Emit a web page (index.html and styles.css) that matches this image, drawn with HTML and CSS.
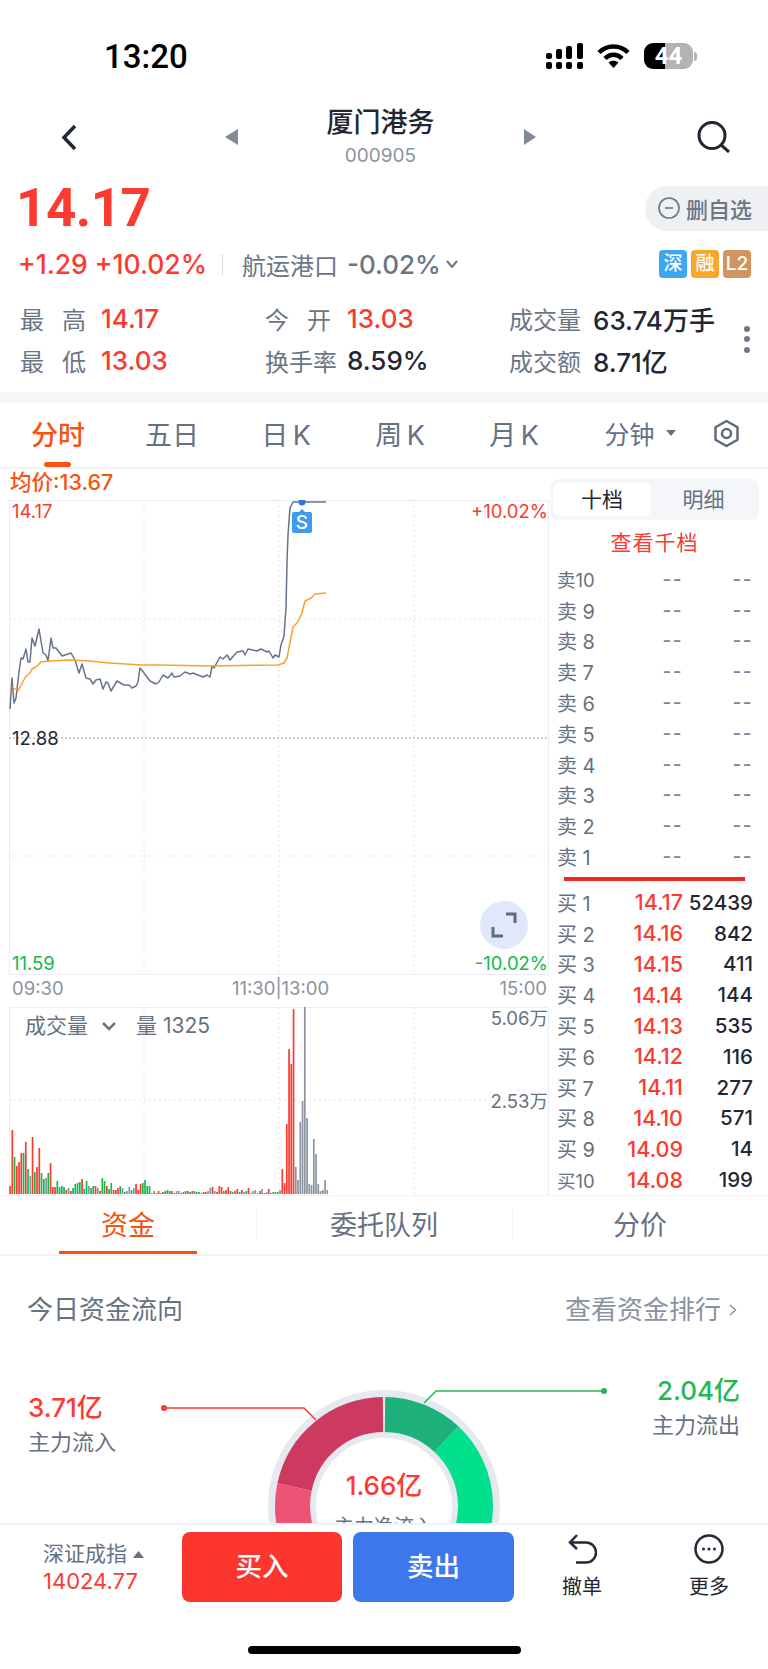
FILE: index.html
```html
<!DOCTYPE html>
<html>
<head>
<meta charset="UTF-8">
<title>厦门港务 000905</title>
<link rel="stylesheet" href="styles.css">
</head>
<body>
<div class="page">

<div class="status">
  <span class="clock">13:20</span>
  <svg class="signal" width="37" height="26" viewBox="0 0 37 26">
    <rect x="0" y="10" width="6" height="6" rx="2"/><rect x="10" y="6" width="6" height="10" rx="2"/><rect x="20" y="3" width="6" height="13" rx="2"/><rect x="31" y="0" width="6" height="16" rx="2"/>
    <rect x="0" y="19" width="6" height="7" rx="2"/><rect x="10" y="19" width="6" height="7" rx="2"/><rect x="20" y="19" width="6" height="7" rx="2"/><rect x="31" y="19" width="6" height="7" rx="2"/>
  </svg>
  <svg class="wifi" width="33" height="25" viewBox="0 0 33 25">
    <path d="M2 9.5C10 1.500 23 1.500 31 9.500M8 15.500C13 10.500 20 10.500 25 15.500" fill="none" stroke="#000" stroke-width="4.500"/>
    <path d="M11.500 19.500C14.500 17 18.500 17 21.500 19.500L16.500 25Z"/>
  </svg>
  <div class="battery"><span>44</span></div>
  <div class="battery-cap"></div>
</div>

<div class="nav">
  <svg class="back" width="16" height="27" viewBox="0 0 16 27"><path d="M14 2L3 13.500L14 25" fill="none" stroke="#1f2733" stroke-width="3.500"/></svg>
  <svg width="14" height="16" viewBox="0 0 14 16"><path d="M13 0V16L0 8Z" fill="#808a98"/></svg>
  <div class="nav-title">
    <div class="name">厦门港务</div>
    <div class="code">000905</div>
  </div>
  <svg width="12" height="16" viewBox="0 0 12 16"><path d="M0 0V16L12 8Z" fill="#808a98"/></svg>
  <svg class="search" width="33" height="32" viewBox="0 0 33 32"><circle cx="15" cy="14.500" r="13" fill="none" stroke="#1f2733" stroke-width="3"/><path d="M24 24L32 31" stroke="#1f2733" stroke-width="3"/></svg>
</div>

<div class="quote">
  <div class="price">14.17</div>
  <div class="fav">
    <svg width="22" height="22" viewBox="0 0 22 22"><circle cx="11" cy="11" r="10" fill="none" stroke="#6b7685" stroke-width="1.600"/><path d="M7 11H15" stroke="#6b7685" stroke-width="1.600"/></svg>
    删自选
  </div>
</div>

<div class="change">
  <span class="up">+1.29 +10.02%</span>
  <i class="sep"></i>
  <span class="sector">航运港口</span>
  <span class="sector-val">-0.02%</span>
  <svg width="12" height="8" viewBox="0 0 12 8"><path d="M1 1L6 7L11 1" fill="none" stroke="#6b7685" stroke-width="2"/></svg>
  <div class="badges">
    <b class="badge blue">深</b><b class="badge orange">融</b><b class="badge tan">L2</b>
  </div>
</div>

<div class="stats">
  <div class="stat"><span class="label w81"><span class="just">最 高</span></span><span class="val up">14.17</span></div>
  <div class="stat"><span class="label w82"><span class="just">今 开</span></span><span class="val up">13.03</span></div>
  <div class="stat"><span class="label w84">成交量</span><span class="val">63.74万手</span></div>
  <div class="dots"><i></i><i></i><i></i></div>
  <div class="stat"><span class="label w81"><span class="just">最 低</span></span><span class="val up">13.03</span></div>
  <div class="stat"><span class="label w82">换手率</span><span class="val">8.59%</span></div>
  <div class="stat"><span class="label w84">成交额</span><span class="val">8.71亿</span></div>
</div>

<div class="band"></div>

<div class="tabs">
  <div class="tab active">分时</div>
  <div class="tab">五日</div>
  <div class="tab">日 K</div>
  <div class="tab">周 K</div>
  <div class="tab">月 K</div>
  <div class="tab minute">分钟<svg class="caret" width="10" height="6" viewBox="0 0 10 6"><path d="M0 0H10L5 6Z" fill="#667182"/></svg></div>
  <div class="tab">
    <svg width="27" height="29" viewBox="0 0 27 29"><path d="M13.500 2L24.500 8.250V20.750L13.500 27L2.500 20.750V8.250Z" fill="none" stroke="#5f6b7c" stroke-width="2.500" stroke-linejoin="round"/><circle cx="13.500" cy="14.500" r="4.500" fill="none" stroke="#5f6b7c" stroke-width="2.500"/></svg>
  </div>
</div>

<div class="main">
  <div class="left">
    <div class="avg">均价:13.67</div>

    <div class="chart">
      <svg width="540" height="475" viewBox="0 0 540 475">
        <rect x="0.500" y="0.500" width="539" height="474" fill="none" stroke="#e9edf4"/>
        <path d="M135 0V475M270 0V475M405 0V475M0 119H540M0 356H540" stroke="#dfe3ea" stroke-dasharray="2 3" fill="none"/>
        <path d="M0 238H540" stroke="#9aa2ad" stroke-dasharray="2 2" fill="none"/>
        <polyline class="price-line" points="1,209 3,178 5,203 7,198 10,172 12,158 14,159 17,149 19,162 21,162 23,138 26,146 30,129 34,153 37,155 39,161 42,138 44,148 47,148 53,156 62,153 66,160 70,173 73,164 77,178 81,179 84,184 87,180 91,179 94,189 97,182 99,183 102,191 108,181 115,185 120,185 123,188 127,186 129,182 131,168 135,173 141,181 147,184 150,182 154,175 159,178 163,173 165,177 171,176 176,172 181,174 184,173 189,175 194,177 198,175 201,177 203,166 205,168 211,157 214,159 218,155 221,160 228,152 234,151 236,155 239,149 248,151 252,149 258,152 260,151 264,158 266,155 270,157 272,145 275,136 277,108 278,62 279,35 281,8 284,2 317,2"/>
        <polyline class="avg-line" points="3,187 9,191 17,176 21,173 23,169 27,167 32,162 40,161 60,160 80,161 100,163 133,165 150,165 201,166 269,165 275,163 278,158 284,127 288,123 293,113 296,101 302,98 306,94 317,93"/>
        <circle cx="293" cy="2" r="3.500" fill="#2f78e4"/>
        <path d="M285 12H290L293 9L296 12H301Q303 12 303 14V31Q303 33 301 33H285Q283 33 283 31V14Q283 12 285 12Z" fill="#3d9bf3"/>
        <text class="s-mark" x="293" y="29" text-anchor="middle">S</text>
      </svg>
      <span class="axis up top-l">14.17</span>
      <span class="axis up top-r">+10.02%</span>
      <span class="axis mid-l">12.88</span>
      <span class="axis down bot-l">11.59</span>
      <span class="axis down bot-r">-10.02%</span>
      <div class="expand">
        <svg width="48" height="48" viewBox="0 0 48 48"><path d="M26 13H35V22M13 26V35H23" fill="none" stroke="#606c7d" stroke-width="3"/></svg>
      </div>
    </div>

    <div class="times"><span>09:30</span><span class="t-mid">11:30|13:00</span><span>15:00</span></div>

    <div class="vol">
      <svg id="vol-chart" width="540" height="188" viewBox="0 0 540 188">
        <path d="M0.500 188V0.500H539.500V188" fill="none" stroke="#e9edf4"/>
        <path d="M135 0V188M270 0V188M405 0V188M0 93H540" stroke="#dfe3ea" stroke-dasharray="2 3" fill="none"/>
      </svg>
      <div class="vol-head">
        <span>成交量</span>
        <svg width="14" height="9" viewBox="0 0 14 9"><path d="M1 1L7 7L13 1" fill="none" stroke="#667182" stroke-width="2.500"/></svg>
        <span>量 1325</span>
      </div>
      <span class="vol-tick v-max">5.06万</span>
      <span class="vol-tick v-half">2.53万</span>
    </div>
  </div>

  <div class="book">
    <div class="seg"><div class="seg-item on">十档</div><div class="seg-item">明细</div></div>
    <div class="more-link">查看千档</div>
    <div class="row"><span class="lv tens">卖10</span><span class="nil">--</span><span class="nil">--</span></div>
    <div class="row"><span class="lv">卖 9</span><span class="nil">--</span><span class="nil">--</span></div>
    <div class="row"><span class="lv">卖 8</span><span class="nil">--</span><span class="nil">--</span></div>
    <div class="row"><span class="lv">卖 7</span><span class="nil">--</span><span class="nil">--</span></div>
    <div class="row"><span class="lv">卖 6</span><span class="nil">--</span><span class="nil">--</span></div>
    <div class="row"><span class="lv">卖 5</span><span class="nil">--</span><span class="nil">--</span></div>
    <div class="row"><span class="lv">卖 4</span><span class="nil">--</span><span class="nil">--</span></div>
    <div class="row"><span class="lv">卖 3</span><span class="nil">--</span><span class="nil">--</span></div>
    <div class="row"><span class="lv">卖 2</span><span class="nil">--</span><span class="nil">--</span></div>
    <div class="row"><span class="lv">卖 1</span><span class="nil">--</span><span class="nil">--</span></div>
    <div class="book-line"></div>
    <div class="row"><span class="lv">买 1</span><span class="px">14.17</span><span class="qty">52439</span></div>
    <div class="row"><span class="lv">买 2</span><span class="px">14.16</span><span class="qty">842</span></div>
    <div class="row"><span class="lv">买 3</span><span class="px">14.15</span><span class="qty">411</span></div>
    <div class="row"><span class="lv">买 4</span><span class="px">14.14</span><span class="qty">144</span></div>
    <div class="row"><span class="lv">买 5</span><span class="px">14.13</span><span class="qty">535</span></div>
    <div class="row"><span class="lv">买 6</span><span class="px">14.12</span><span class="qty">116</span></div>
    <div class="row"><span class="lv">买 7</span><span class="px">14.11</span><span class="qty">277</span></div>
    <div class="row"><span class="lv">买 8</span><span class="px">14.10</span><span class="qty">571</span></div>
    <div class="row"><span class="lv">买 9</span><span class="px">14.09</span><span class="qty">14</span></div>
    <div class="row"><span class="lv tens">买10</span><span class="px">14.08</span><span class="qty">199</span></div>
  </div>
</div>

<div class="sub-tabs">
  <div class="sub-tab active">资金</div>
  <div class="sub-tab">委托队列</div>
  <div class="sub-tab">分价</div>
</div>

<div class="flow">
  <svg class="donut" width="768" height="267" viewBox="0 0 768 267">
    <circle cx="384" cy="250" r="92" fill="none" stroke="#e6e9f0" stroke-width="48"/>
    <g fill="none" stroke-width="35">
      <path d="M385 158.500A91.500 91.500 0 0 1 446.400 183.100" stroke="#1db07a"/>
      <path d="M446.400 183.100A91.500 91.500 0 0 1 448.700 314.700" stroke="#02e08e"/>
      <path d="M383 158.500A91.500 91.500 0 0 0 294.500 231" stroke="#cc3a5f"/>
      <path d="M294.500 231A91.500 91.500 0 0 0 319.300 314.700" stroke="#ec5475"/>
    </g>
    <path d="M164 152H304L316 164" fill="none" stroke="#fb3a30" stroke-width="1.500"/>
    <circle cx="164" cy="152" r="3" fill="#fb3a30"/>
    <path d="M424 147L436 135H604" fill="none" stroke="#1fb954" stroke-width="1.500"/>
    <circle cx="604" cy="135" r="3" fill="#1fb954"/>
  </svg>
  <div class="flow-head">
    <span>今日资金流向</span>
    <span class="rank">查看资金排行<svg width="8" height="12" viewBox="0 0 8 12"><path d="M1 1L6.500 6L1 11" fill="none" stroke="#8a93a0" stroke-width="1.500"/></svg></span>
  </div>
  <div class="flow-val in"><b>3.71亿</b><span>主力流入</span></div>
  <div class="flow-val out"><b>2.04亿</b><span>主力流出</span></div>
  <div class="flow-val net"><b>1.66亿</b><span>主力净流入</span></div>
</div>

<div class="footer">
  <div class="foot-row">
    <div class="index">
      <div class="index-name">深证成指<svg width="11" height="7" viewBox="0 0 11 7"><path d="M5.500 0L11 7H0Z" fill="#667182"/></svg></div>
      <div class="index-val">14024.77</div>
    </div>
    <div class="trade buy">买入</div>
    <div class="trade sell">卖出</div>
    <div class="act undo">
      <svg width="30" height="30" viewBox="0 0 30 30"><path d="M10 1L3 8.500L10 15M3 8.500H19A10 10 0 0 1 19 28.500H9" fill="none" stroke="#222a35" stroke-width="2.500"/></svg>
      <span>撤单</span>
    </div>
    <div class="act more">
      <svg width="30" height="30" viewBox="0 0 30 30"><circle cx="15" cy="15" r="13.500" fill="none" stroke="#222a35" stroke-width="2.500"/><circle cx="9.500" cy="15" r="1.500" fill="#222a35"/><circle cx="15" cy="15" r="1.500" fill="#222a35"/><circle cx="20.500" cy="15" r="1.500" fill="#222a35"/></svg>
      <span>更多</span>
    </div>
  </div>
  <div class="home-bar"></div>
</div>

</div>
<script src="script.js"></script>
</body>
</html>
```

FILE: styles.css
```css
:root {
  --red: #fb3a30;
  --green: #13b84f;
  --orange: #f5540e;
  --ink: #1f2733;
  --gray: #6b7685;
  --light: #8a93a0;
  --line: #f1f3f7;
}

* { box-sizing: border-box; }

html, body {
  margin: 0;
  padding: 0;
  background: #fff;
}

.page {
  width: 768px;
  height: 1669px;
  overflow: hidden;
  display: flex;
  flex-direction: column;
  color: var(--ink);
  font-family: Inter, "Noto Sans CJK SC", sans-serif;
}

.up { color: var(--red); }
.down { color: var(--green); }

/* status bar */
.status {
  height: 100px;
  flex: none;
  display: flex;
  align-items: flex-start;
  padding: 43px 0 0 104px;
  color: #000;
}
.clock {
  font-family: Roboto, sans-serif;
  font-size: 33px;
  line-height: 28px;
  font-weight: 500;
}
.signal { margin-left: auto; }
.wifi { margin-left: 14px; }
.battery {
  width: 49px;
  height: 26px;
  margin-left: 14px;
  border-radius: 9px;
  background: linear-gradient(90deg, #000 43%, #b3b3b3 43%);
  color: #fff;
  font-family: Roboto, sans-serif;
  font-size: 24px;
  font-weight: 700;
  line-height: 26px;
  text-align: center;
}
.battery-cap {
  width: 3px;
  height: 9px;
  margin: 9px 71px 0 1px;
  border-radius: 0 3px 3px 0;
  background: #b3b3b3;
}

/* title */
.nav {
  height: 74px;
  flex: none;
  display: grid;
  grid-template-columns: 225px 14px 285px 12px 1fr;
  align-items: center;
}
.back { margin-left: 61px; }
.search { margin-left: 161px; }
.nav-title { text-align: center; }
.name {
  margin-left: -2px;
  font-size: 27px;
  line-height: 32px;
  font-weight: 500;
}
.code {
  margin-top: 6px;
  margin-left: -2px;
  font-size: 19px;
  line-height: 22px;
  color: var(--light);
}

/* price */
.quote {
  height: 45px;
  margin-top: 12px;
  flex: none;
  display: flex;
  justify-content: space-between;
  padding-left: 16px;
}
.price {
  font-family: Roboto, sans-serif;
  font-size: 53px;
  line-height: 45px;
  font-weight: 700;
  color: var(--red);
  letter-spacing: -0.5px;
}
.fav {
  width: 123px;
  display: flex;
  align-items: center;
  gap: 6px;
  padding-left: 13px;
  padding-bottom: 2px;
  border-radius: 22px 0 0 22px;
  background: #eef0f3;
  color: var(--gray);
  font-size: 22px;
  font-weight: 500;
}

.change {
  height: 28px;
  margin-top: 19px;
  flex: none;
  display: flex;
  align-items: center;
  padding: 0 17px 0 18px;
  font-size: 26.500px;
  font-weight: 500;
  white-space: nowrap;
}
.sep {
  width: 1px;
  height: 21px;
  margin: 0 19px 0 15px;
  background: #d5d9df;
}
.sector { color: var(--gray); font-size: 24px; font-weight: 400; }
.sector-val {
  margin: 0 5px 0 9px;
  color: var(--gray);
  font-size: 26px;
}
.badges {
  margin-left: auto;
  display: flex;
  gap: 4px;
}
.badge {
  width: 28px;
  height: 28px;
  border-radius: 4px;
  color: #fff;
  font-size: 19px;
  font-weight: 500;
  line-height: 28px;
  text-align: center;
}
.blue { background: #3ea7f2; }
.orange { background: #f9a62a; }
.tan { background: #cf9462; }

/* stats */
.stats {
  margin-top: 19px;
  padding-left: 20px;
  flex: none;
  display: grid;
  grid-template-columns: 245px 244px 233px 10px;
  grid-auto-rows: 42px;
  align-items: center;
}
.stat { display: flex; align-items: center; }
.label {
  flex: none;
  color: var(--gray);
  font-size: 24px;
}
.w81 { width: 81px; }
.w82 { width: 82px; }
.w84 { width: 84px; }
.just {
  display: inline-block;
  width: 66px;
  text-align-last: justify;
}
.val {
  font-size: 26px;
  font-weight: 500;
  white-space: nowrap;
}
.dots {
  grid-column: 4;
  grid-row: 1 / span 2;
  display: flex;
  flex-direction: column;
  align-items: center;
  gap: 4.500px;
}
.dots i {
  width: 6px;
  height: 6px;
  border-radius: 50%;
  background: #6f7988;
}

.band {
  height: 11px;
  margin-top: 11px;
  flex: none;
  background: #f5f6f9;
}

/* chart tabs */
.tabs {
  height: 66px;
  flex: none;
  display: grid;
  grid-template-columns: repeat(6, 114px) 1fr;
  padding-left: 1px;
  border-bottom: 2px solid var(--line);
}
.tab {
  position: relative;
  display: flex;
  align-items: center;
  justify-content: center;
  padding-bottom: 4px;
  color: #667182;
  font-size: 27px;
  word-spacing: -3px;
}
.tab.active {
  color: var(--orange);
  font-weight: 500;
}
.tab.active::after {
  content: "";
  position: absolute;
  left: 43px;
  bottom: 0;
  width: 27px;
  height: 5px;
  border-radius: 3px;
  background: var(--orange);
}
.tab.minute {
  padding-left: 24px;
  font-size: 25px;
}
.caret { margin-left: 11px; }

.main {
  height: 726px;
  flex: none;
  display: flex;
}
.left { width: 550px; flex: none; }
.avg {
  height: 31px;
  padding-left: 10px;
  color: var(--orange);
  font-size: 21.500px;
  line-height: 26px;
  font-weight: 500;
}

.chart {
  position: relative;
  width: 540px;
  height: 475px;
  margin-left: 9px;
}
.chart svg, .vol svg { display: block; }
.price-line, .avg-line {
  fill: none;
  stroke-width: 1.500;
  stroke-linejoin: round;
}
.price-line { stroke: #66748a; }
.avg-line { stroke: #f7a032; }
.s-mark {
  fill: #fff;
  font-size: 19px;
  font-weight: 500;
}
.axis {
  position: absolute;
  font-size: 18.500px;
  line-height: 20px;
}
.top-l { left: 3px; top: 1px; }
.top-r { right: 1px; top: 1px; }
.mid-l { left: 3px; top: 228px; color: var(--ink); }
.bot-l { left: 3px; bottom: 2px; }
.bot-r { right: 1px; bottom: 2px; }
.expand {
  position: absolute;
  left: 471px;
  top: 401px;
  width: 48px;
  height: 48px;
  border-radius: 50%;
  background: #e0e9fb;
}

.times {
  height: 32px;
  margin-left: 12px;
  width: 535px;
  display: flex;
  justify-content: space-between;
  color: var(--light);
  font-size: 18.500px;
  line-height: 24px;
  padding-top: 1px;
}
.t-mid { margin-left: -2px; }

.vol {
  position: relative;
  width: 540px;
  height: 188px;
  margin-left: 9px;
}
.vol-head {
  position: absolute;
  left: 16px;
  top: 6px;
  display: flex;
  align-items: center;
  color: #667182;
  font-size: 21px;
  line-height: 26px;
}
.vol-head svg { margin: 0 20px 0 14px; }
.vol-tick {
  position: absolute;
  right: 1px;
  color: #667182;
  font-size: 18.500px;
  line-height: 20px;
}
.v-max { top: 1px; }
.v-half { top: 84px; }

/* order book */
.book {
  width: 218px;
  flex: none;
}
.seg {
  width: 209px;
  height: 41px;
  margin-top: 10px;
  padding: 4px 3px;
  display: flex;
  border-radius: 8px;
  background: #f5f6f9;
}
.seg-item {
  flex: 1;
  color: #667182;
  font-size: 21px;
  line-height: 33px;
  text-align: center;
}
.seg-item.on {
  flex: none;
  width: 98px;
  border-radius: 6px;
  background: #fff;
  color: var(--ink);
}
.more-link {
  height: 44px;
  padding: 10px 0 0 0;
  width: 209px;
  color: var(--red);
  font-size: 21px;
  line-height: 26px;
  text-align: center;
  letter-spacing: 1px;
}
.row {
  height: 30.800px;
  padding-left: 7px;
  display: grid;
  grid-template-columns: 56px 70px 70px;
  align-items: center;
  font-size: 20.500px;
  font-weight: 500;
  white-space: nowrap;
}
.lv {
  color: #667182;
  font-weight: 400;
  font-size: 20px;
}
.lv.tens { font-size: 18.500px; }
.nil {
  color: #7d8695;
  text-align: right;
  font-size: 19px;
  letter-spacing: 1.500px;
}
.px {
  color: var(--red);
  text-align: right;
  font-size: 21.500px;
}
.qty { text-align: right; }
.book-line {
  width: 181px;
  height: 4px;
  margin: 5px 0 6px 14px;
  background: #ea2a26;
}

/* lower tabs */
.sub-tabs {
  height: 61px;
  flex: none;
  display: grid;
  grid-template-columns: repeat(3, 1fr);
  border-top: 1px solid var(--line);
  border-bottom: 2px solid var(--line);
}
.sub-tab {
  position: relative;
  display: flex;
  align-items: center;
  justify-content: center;
  padding-bottom: 4px;
  color: #667182;
  font-size: 27px;
}
.sub-tab + .sub-tab::before {
  content: "";
  position: absolute;
  left: 0;
  top: 14px;
  width: 1px;
  height: 30px;
  background: var(--line);
}
.sub-tab.active { color: var(--orange); }
.sub-tab.active::after {
  content: "";
  position: absolute;
  left: 59px;
  bottom: 0;
  width: 138px;
  height: 3px;
  background: var(--orange);
}

/* money flow */
.flow {
  position: relative;
  height: 267px;
  flex: none;
  overflow: hidden;
}
.donut {
  position: absolute;
  left: 0;
  top: 0;
}
.flow-head {
  position: relative;
  display: flex;
  justify-content: space-between;
  padding: 41px 31px 0 27px;
  color: #667182;
  font-size: 26px;
  line-height: 26px;
}
.rank {
  display: flex;
  align-items: center;
  gap: 8px;
  color: var(--light);
}
.flow-val {
  position: absolute;
  display: flex;
  flex-direction: column;
  color: #667182;
  font-size: 22px;
  line-height: 30px;
}
.flow-val b {
  font-size: 26px;
  font-weight: 500;
  line-height: 30px;
  margin-bottom: 6px;
}
.in { left: 28px; top: 137px; }
.in b { color: var(--red); }
.in span { margin-top: -2px; }
.out { right: 28px; top: 120px; align-items: flex-end; }
.out b { color: #1fb954; margin-bottom: 4px; }
.net {
  left: 284px;
  width: 200px;
  top: 215px;
  align-items: center;
  font-size: 20px;
}
.net b { color: var(--red); margin-bottom: 11px; }

/* bottom bar */
.footer {
  flex: 1;
  position: relative;
  display: flex;
  flex-direction: column;
  padding-top: 7px;
  border-top: 2px solid var(--line);
  background: #fff;
}
.foot-row {
  height: 70px;
  flex: none;
  display: flex;
}
.index {
  width: 182px;
  flex: none;
  padding: 10px 0 0 43px;
}
.index-name {
  display: flex;
  align-items: center;
  gap: 6px;
  color: #667182;
  font-size: 21px;
  line-height: 24px;
}
.index-val {
  color: var(--red);
  font-size: 22px;
  line-height: 30px;
}
.trade {
  height: 70px;
  flex: none;
  border-radius: 8px;
  color: #fff;
  font-size: 26.500px;
  font-weight: 500;
  line-height: 68px;
  text-align: center;
}
.buy { width: 160px; background: #fb362f; }
.sell { width: 161px; margin-left: 11px; background: #3c78ec; }
.act {
  flex: none;
  display: flex;
  flex-direction: column;
  align-items: center;
  color: var(--ink);
  font-size: 20px;
  line-height: 26px;
}
.act svg { margin: 2px 0 10px; display: block; }
.undo { width: 136px; }
.more { width: 118px; }
.home-bar {
  width: 273px;
  height: 8px;
  margin-top: 44px;
  align-self: center;
  border-radius: 4px;
  background: #000;
}
```

FILE: script.js
```js
// volume bars, one per minute: colour letter + height in px
var vols = ("r8 r64 g37 r28 r32 r41 g41 r52 g25 a18 r57 g22 r27 r46 g21 g15 a16 g21 r31 r7 r7 g13 g7 g8 g7 r4 a6 r3 g6 g10 " +
  "g11 g12 r15 g5 g13 a8 g6 g8 r8 a6 r3 g16 g13 r8 g5 g11 r4 r4 r6 g8 a6 g2 a3 a7 g4 a6 r10 r4 r10 g11 g14 g8 g8 a1 a3 g1 r3 a1 r2 r3 " +
  "g4 g3 r3 g1 a3 a3 r1 g2 r3 r3 g2 r3 g3 g2 g2 a1 r2 r2 a3 a6 r7 a3 r2 r8 r7 g3 r4 r7 g3 a2 r3 r5 g2 r4 a2 g3 r6 a1 a3 a4 a1 r3 a5 g1 a2 r5 g1 g2 g2 g2 a4 " +
  "r25 r11 r70 r145 r130 r185 a27 a14 a72 a93 a187 a76 a10 a9 a55 a40 a10 a3 a4 a14 a4").split(" ");

var colors = { r: "#fb3a30", g: "#13b84f", a: "#8a94a0" };
var svg = document.getElementById("vol-chart");

vols.forEach(function (v, i) {
  var h = parseInt(v.slice(1), 10);
  var bar = document.createElementNS("http://www.w3.org/2000/svg", "rect");
  bar.setAttribute("x", (i * 2.25 + 0.2).toFixed(2));
  bar.setAttribute("y", 187 - h);
  bar.setAttribute("width", 1.7);
  bar.setAttribute("height", h);
  bar.setAttribute("fill", colors[v[0]]);
  svg.appendChild(bar);
});
```
